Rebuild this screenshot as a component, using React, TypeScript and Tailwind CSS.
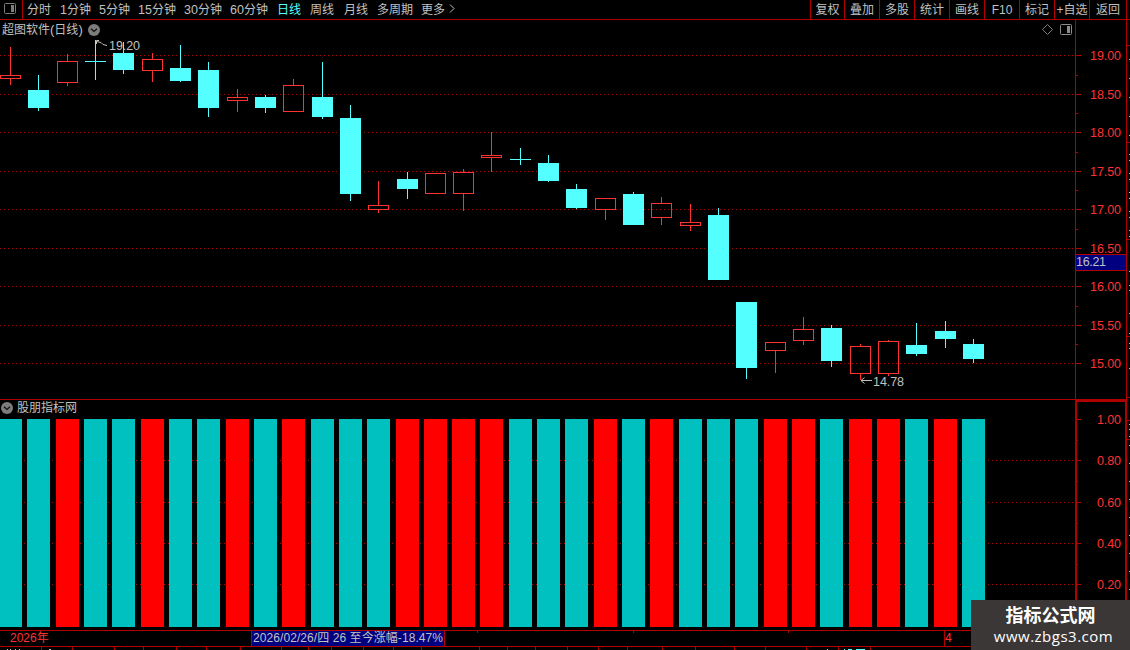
const RED = "#b00000";
const UP = "#ff3232";
const DOWN = "#54ffff";

// x, high, body top, body bottom, low, u = up / d = down
const candles: [number, number, number, number, number, string][] = [
  [10, 47, 75, 79, 85, "u"],
  [38, 75, 90, 108, 111, "d"],
  [67, 54, 61, 83, 86, "u"],
  [95, 40, 61, 62, 80, "d"],
  [123, 42, 53, 70, 74, "d"],
  [152, 53, 59, 71, 82, "u"],
  [180, 45, 68, 81, 82, "d"],
  [208, 62, 70, 108, 117, "d"],
  [237, 89, 97, 101, 112, "u"],
  [265, 95, 97, 108, 113, "d"],
  [293, 79, 85, 112, 112, "u"],
  [322, 62, 97, 117, 119, "d"],
  [350, 105, 118, 194, 201, "d"],
  [378, 181, 205, 210, 213, "u"],
  [407, 172, 179, 189, 199, "d"],
  [435, 173, 173, 194, 194, "u"],
  [463, 169, 172, 194, 211, "u"],
  [491, 132, 155, 158, 172, "u"],
  [520, 148, 159, 160, 165, "d"],
  [548, 155, 163, 181, 182, "d"],
  [576, 184, 189, 208, 209, "d"],
  [605, 198, 198, 210, 220, "u"],
  [633, 192, 194, 225, 225, "d"],
  [661, 197, 203, 218, 225, "u"],
  [690, 204, 222, 226, 231, "u"],
  [718, 208, 215, 280, 280, "d"],
  [746, 302, 302, 368, 379, "d"],
  [775, 342, 342, 351, 373, "u"],
  [803, 317, 329, 341, 345, "u"],
  [831, 325, 328, 361, 367, "d"],
  [860, 344, 346, 374, 380, "u"],
  [888, 340, 341, 374, 376, "u"],
  [916, 323, 345, 354, 356, "d"],
  [945, 321, 331, 339, 348, "d"],
  [973, 339, 344, 359, 363, "d"],
];

const signals = "CCRCCRCCRCRCCCRRRRCCCRCRCCCRRCRRCRC";

const prices: [number, string][] = [
  [55, "19.00"],
  [94, "18.50"],
  [132, "18.00"],
  [171, "17.50"],
  [209, "17.00"],
  [248, "16.50"],
  [286, "16.00"],
  [325, "15.50"],
  [363, "15.00"],
];
const priceMinor = [75, 113, 152, 190, 229, 306, 344];

const levels: [number, string][] = [
  [419, "1.00"],
  [460, "0.80"],
  [502, "0.60"],
  [543, "0.40"],
  [584, "0.20"],
];
const levelMinor = [440, 481, 523, 564];

const periods = [
  { num: "", label: "分时", w: "w-[33px]" },
  { num: "1", label: "分钟", w: "w-[39px]" },
  { num: "5", label: "分钟", w: "w-[39px]" },
  { num: "15", label: "分钟", w: "w-[46px]" },
  { num: "30", label: "分钟", w: "w-[46px]" },
  { num: "60", label: "分钟", w: "w-[47px]" },
  { num: "", label: "日线", w: "w-[33px]" },
  { num: "", label: "周线", w: "w-[34px]" },
  { num: "", label: "月线", w: "w-[33px]" },
  { num: "", label: "多周期", w: "w-[44px]" },
  { num: "", label: "更多", w: "w-[28px]" },
];

const tools = [
  { label: "复权", w: "w-[34px]" },
  { label: "叠加", w: "w-[35px]" },
  { label: "多股", w: "w-[35px]" },
  { label: "统计", w: "w-[35px]" },
  { label: "画线", w: "w-[35px]" },
  { label: "F10", w: "w-[35px]" },
  { label: "标记", w: "w-[35px]" },
  { label: "+自选", w: "w-[35px]" },
  { label: "返回", w: "w-[37px]" },
];

const edgeRed = [25, 45, 142, 239, 336, 397, 420, 439];
const edgeText = [
  31, 35, 37, 59, 78, 97, 116, 135, 154, 160, 173, 179, 192, 198, 211, 217, 230, 236, 271, 285, 290, 313, 333, 343,
  348, 368, 424, 429, 436, 445, 463, 481, 499, 517, 535, 553, 571, 589,
];
const bottomTicks = [
  41, 72, 114, 143, 176, 206, 240, 281, 308, 331, 363, 393, 421, 479, 507, 535, 567, 598, 627, 662, 695, 734, 765, 806,
  838, 870,
];

const PanelIcon = ({ color }: { color: string }) => (
  <svg width="12" height="11" viewBox="0 0 12 11" className="shrink-0">
    <rect x="0.5" y="0.5" width="11" height="10" rx="1" fill="none" stroke={color} />
    <rect x="7" y="2" width="3" height="7" fill={color} />
  </svg>
);

const DownIcon = () => (
  <svg width="12" height="12" viewBox="0 0 12 12" className="shrink-0">
    <circle cx="6" cy="6" r="6" fill="#7c7c7c" />
    <path d="M3 4.8 L6 7.5 L9 4.8" fill="none" stroke="#111" strokeWidth="1.3" />
  </svg>
);

const Dots = ({ y }: { y: number }) => (
  <line x1="0" x2="1075" y1={y + 0.5} y2={y + 0.5} stroke={RED} strokeDasharray="1 3" shapeRendering="crispEdges" />
);

const Label = ({ x, y, w, text, color }: { x: number; y: number; w: number; text: string; color: string }) => (
  <text x={x} y={y} textLength={w} fill={color} fontSize="12.5">
    {text}
  </text>
);

const PriceChart = () => (
  <svg width="1130" height="361" viewBox="0 39 1130 361" className="block shrink-0">
    {prices.map(([y]) => (
      <Dots key={y} y={y} />
    ))}
    <g shapeRendering="crispEdges">
      {candles.map(([x, high, top, bottom, low, dir]) =>
        dir === "u" ? (
          <g key={x} fill={UP}>
            <rect x={x} y={high} width="1" height={top - high} />
            <rect x={x} y={bottom} width="1" height={low - bottom} />
            <rect x={x - 9.5} y={top + 0.5} width="20" height={bottom - top - 1} fill="none" stroke={UP} />
          </g>
        ) : (
          <g key={x} fill={DOWN}>
            <rect x={x} y={high} width="1" height={low - high} />
            <rect x={x - 10} y={top} width="21" height={bottom - top} />
          </g>
        )
      )}
    </g>

    {/* high / low marks */}
    <path d="M107 45.5 L103 44.5 L101 42.5 L96.5 41.5 M99 40.5 H96.5 V44" fill="none" stroke="#c0c0c0" />
    <Label x={109} y={50} w={31} text="19.20" color="#c0c0c0" />
    <path d="M872 380.5 H861 M864.5 377.5 L861 380.5 L864.5 383.5" fill="none" stroke="#c0c0c0" />
    <Label x={873} y={386} w={31} text="14.78" color="#c0c0c0" />

    {/* axis */}
    <g fill={RED} shapeRendering="crispEdges">
      <rect x="1075" y="39" width="1" height="361" />
      <rect x="1126" y="39" width="1" height="361" />
      <rect x="0" y="399" width="1127" height="1" />
      {prices.map(([y]) => (
        <rect key={y} x="1076" y={y} width="5" height="1" />
      ))}
      {priceMinor.map((y) => (
        <rect key={y} x="1076" y={y} width="2" height="1" />
      ))}
    </g>
    {prices.map(([y, t]) => (
      <Label key={t} x={1090} y={y + 5} w={31} text={t} color={UP} />
    ))}
    <rect x="1076" y="254" width="50" height="17" fill={RED} />
    <rect x="1076" y="255" width="50" height="15" fill="#000080" />
    <Label x={1076} y={266} w={30} text="16.21" color="#c0c0c0" />
    <Edge from={39} to={400} />
  </svg>
);

const Edge = ({ from, to }: { from: number; to: number }) => (
  <g shapeRendering="crispEdges">
    {edgeRed
      .filter((y) => y >= from && y < to)
      .map((y) => (
        <rect key={y} x="1127" y={y} width="3" height="1" fill={RED} />
      ))}
    {edgeText
      .filter((y) => y >= from && y < to)
      .map((y) => (
        <rect key={y} x="1129" y={y} width="1" height="1" fill="#c0c0c0" />
      ))}
  </g>
);

const SignalChart = () => (
  <svg width="1130" height="217" viewBox="0 413 1130 217" className="block shrink-0">
    {levels.slice(1).map(([y]) => (
      <Dots key={y} y={y} />
    ))}
    <g shapeRendering="crispEdges">
      {candles.map(([x], i) => (
        <rect key={x} x={x - 11} y="419" width="23" height="208" fill={signals[i] === "R" ? "#ff0000" : "#00c0c0"} />
      ))}
    </g>
    <g fill={RED} shapeRendering="crispEdges">
      <rect x="1075" y="413" width="2" height="217" />
      <rect x="1125" y="413" width="2" height="217" />
      {levels.map(([y]) => (
        <rect key={y} x="1077" y={y} width="4" height="1" />
      ))}
      {levelMinor.map((y) => (
        <rect key={y} x="1077" y={y} width="1" height="1" />
      ))}
    </g>
    {levels.map(([y, t]) => (
      <Label key={t} x={1097} y={y + 5} w={24} text={t} color={UP} />
    ))}
    <Edge from={417} to={630} />
  </svg>
);

export default function App() {
  return (
    <div className="relative flex h-[650px] w-[1130px] flex-col overflow-hidden bg-black font-['Liberation_Sans','Noto_Sans_CJK_SC',sans-serif] text-[12px] text-[#c0c0c0]">
      {/* toolbar */}
      <div className="flex h-5 shrink-0 justify-between border-b border-[#b00000] leading-[20px]">
        <div className="flex">
          <div className="flex w-[23px] items-center border-r border-[#b00000] pb-0.5 pl-1">
            <PanelIcon color="#7c7c7c" />
          </div>
          <div className="flex pl-1">
            {periods.map((p, i) => (
              <span
                key={i}
                className={`${p.w} shrink-0 whitespace-nowrap ${p.label === "日线" ? "text-[#54ffff]" : ""}`}
              >
                {p.num && <span className="text-[12.5px]">{p.num}</span>}
                {p.label}
              </span>
            ))}
          </div>
          <svg width="7" height="19" viewBox="0 0 7 19">
            <path d="M1 4.5 L5 8.5 L1 12.5" fill="none" stroke="#c0c0c0" />
          </svg>
        </div>
        <div className="mr-[3px] flex border-l border-[#b00000]">
          {tools.map((t) => (
            <span key={t.label} className={`${t.w} whitespace-nowrap border-r border-[#b00000] text-center`}>
              {t.label}
            </span>
          ))}
        </div>
      </div>

      {/* price panel */}
      <div className="flex h-[19px] shrink-0 leading-[19px]">
        <div className="flex flex-1 items-center gap-[5px] pl-0.5">
          <span className="w-[81px] whitespace-nowrap">
            超图软件<span className="text-[13px]">(</span>日线<span className="text-[13px]">)</span>
          </span>
          <DownIcon />
        </div>
        <div className="flex w-[33px] items-center gap-[7px]">
          <svg width="11" height="11" viewBox="0 0 11 11">
            <path d="M5.5 0.5 L10.5 5.5 L5.5 10.5 L0.5 5.5 Z" fill="none" stroke="#7c7c7c" />
          </svg>
          <PanelIcon color="#8c8c8c" />
        </div>
        <div className="mr-[3px] w-[52px] border-x border-[#b00000]" />
      </div>
      <PriceChart />

      {/* signal panel */}
      <div className="flex h-[13px] shrink-0 leading-[17px]">
        <div className="flex flex-1 items-start gap-1 pl-px">
          <span className="pt-0.5">
            <DownIcon />
          </span>
          <span>股朋指标网</span>
        </div>
        <div className="mr-[3px] w-[52px] border-2 border-b-0 border-[#b00000]" />
      </div>
      <SignalChart />

      {/* date axis */}
      <div className="flex h-[17px] shrink-0 border-y border-[#b00000] leading-[15px]">
        <div className="w-[251px] pl-2.5 text-[#ff3232]">2026年</div>
        <div className="flex w-[194px] whitespace-nowrap border-x border-[#b00000] bg-[#000080] pl-px">
          <svg width="191" height="15" viewBox="0 0 191 15">
            <text x="0" y="11" textLength="190" fill="#c0c0c0" fontSize="12">
              2026/02/26/四 26 至今涨幅-18.47%
            </text>
          </svg>
        </div>
        <svg width="499" height="15" viewBox="445 631 499 15" shapeRendering="crispEdges">
          <g fill={RED}>
            <rect x="477" y="631" width="1" height="2" />
            <rect x="633" y="631" width="1" height="2" />
            <rect x="788" y="631" width="1" height="2" />
          </g>
        </svg>
        <div className="flex-1 border-l border-[#b00000] text-[#ff3232]">4</div>
      </div>
      <svg width="1130" height="3" viewBox="0 647 1130 3" className="shrink-0" shapeRendering="crispEdges">
        {bottomTicks.map((x) => (
          <rect key={x} x={x} y="647" width="1" height="3" fill={RED} />
        ))}
        <path d="M7 649.5 H8 M10 649.5 H11 M15 649.5 H16 M19 649.5 H20 M49 649.5 H51 M827 649.5 H828" stroke="#c0c0c0" />
        <path d="M844 649.5 H845 M848 649.5 H852 M856 649.5 H865" stroke={DOWN} />
      </svg>

      {/* site badge */}
      <div className="absolute right-0 bottom-0 flex h-[50px] w-[159px] flex-col items-center bg-[#3c3737] text-white">
        <span className="mt-1 text-[18px] leading-[24px] font-bold">指标公式网</span>
        <span className="mr-[-6px] font-['Open_Sans','Noto_Sans',sans-serif] text-[15px] leading-[16px] tracking-[0.5px]">
          www.zbgs3.com
        </span>
      </div>
    </div>
  );
}
